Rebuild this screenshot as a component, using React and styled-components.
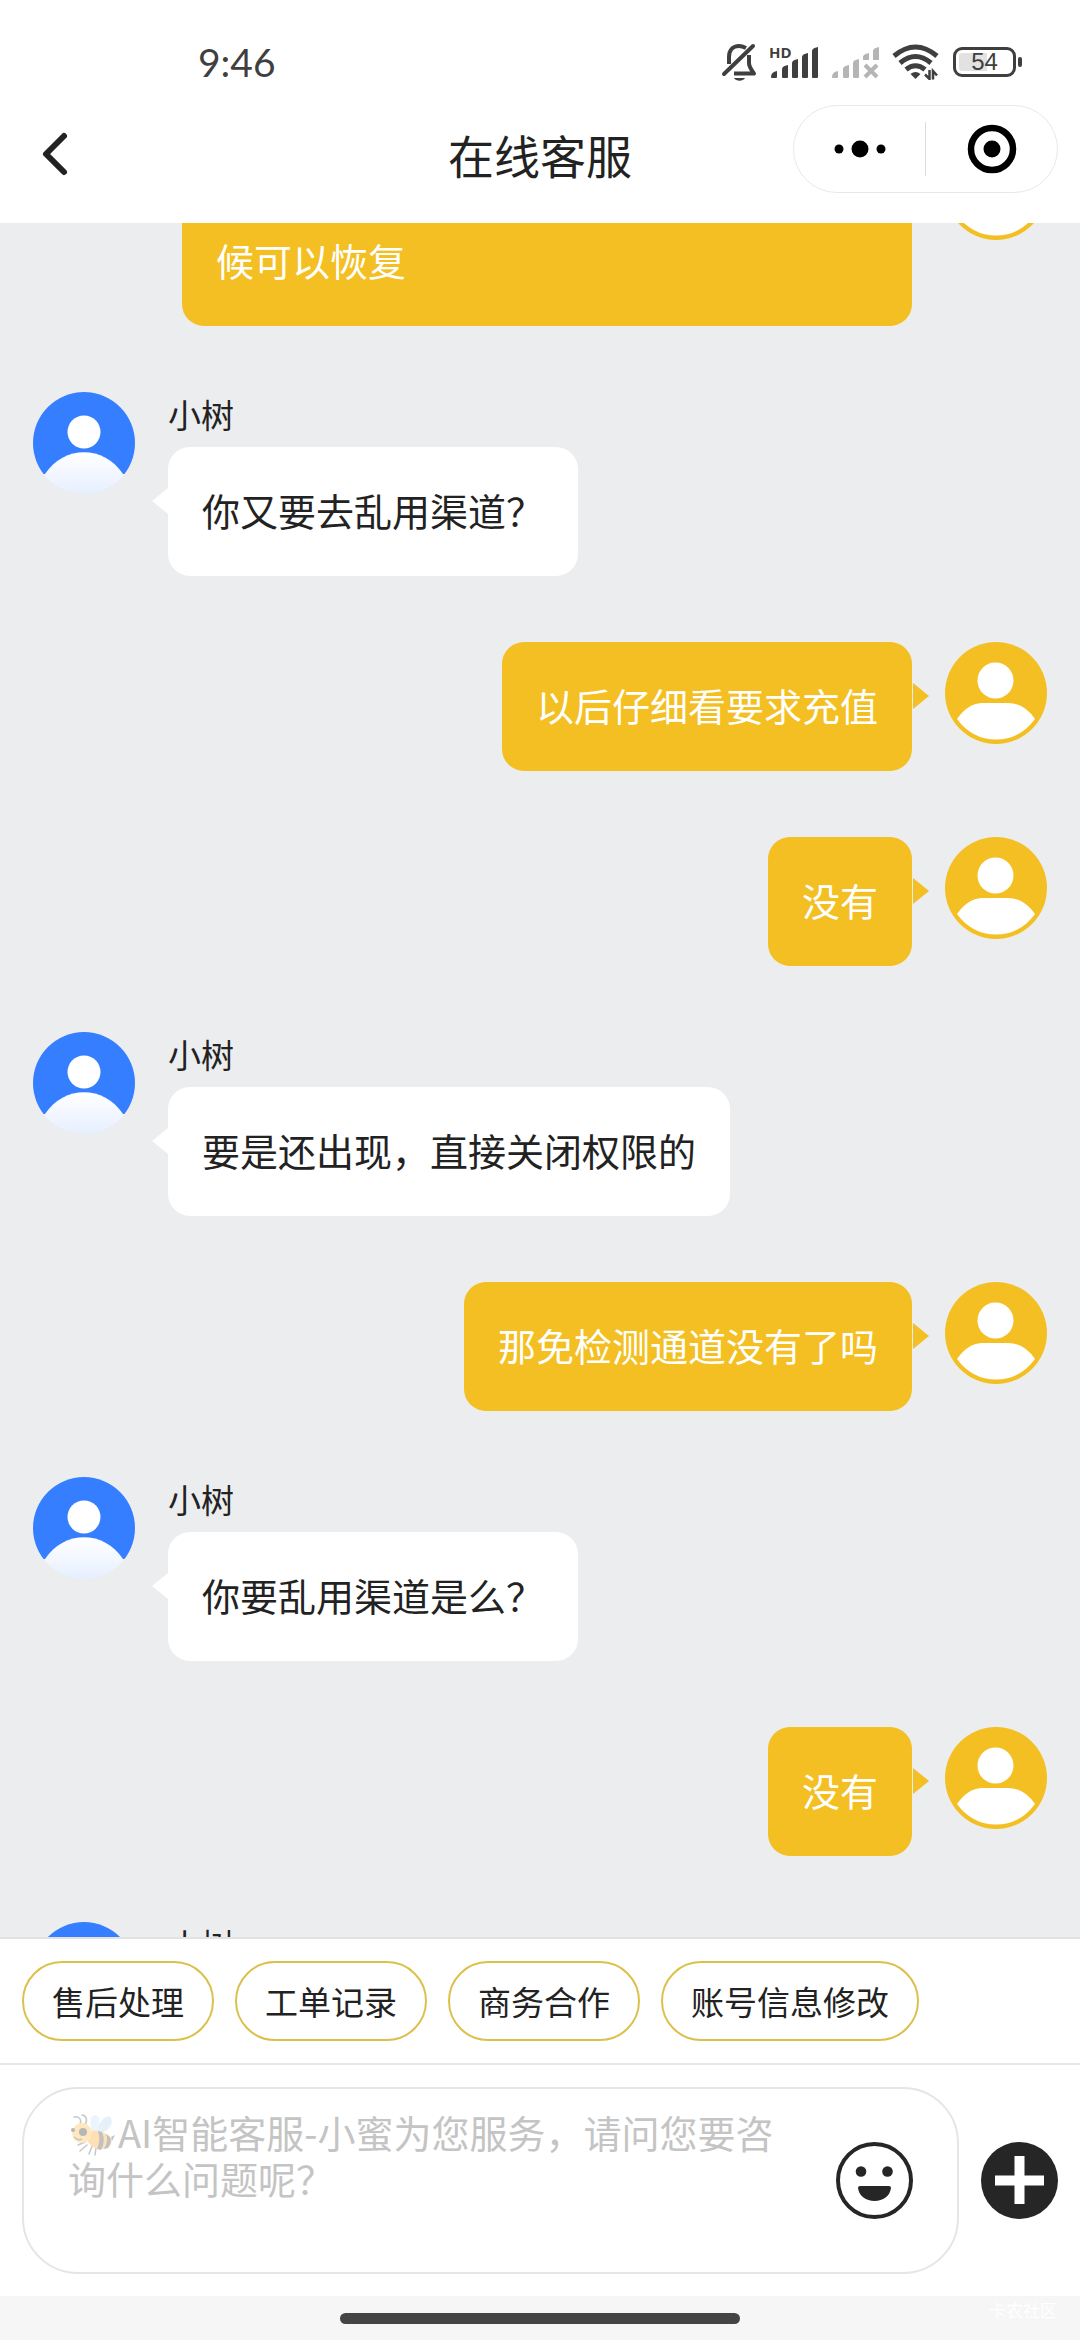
import React, { useLayoutEffect, useRef } from 'react';
import styled, { createGlobalStyle, css } from 'styled-components';

const GlobalStyle = createGlobalStyle`
  * {
    box-sizing: border-box;
  }

  body {
    margin: 0;
    font-family: 'Noto Sans CJK SC', 'Noto Sans', sans-serif;
    color: #222;
    background-color: #fff;
  }

  button {
    padding: 0;
    border: none;
    background: none;
    font: inherit;
    color: inherit;
    cursor: pointer;
  }

  svg {
    display: block;
  }
`;

const Page = styled.div`
  display: flex;
  flex-direction: column;
  height: 100vh;
`;

const StatusBar = styled.div`
  display: flex;
  align-items: center;
  justify-content: space-between;
  height: 94px;
  padding: 30px 58px 0 198px;
  color: #3f3f3f;
`;

const Clock = styled.time`
  font-family: Lato, sans-serif;
  font-size: 39px;
  line-height: 64px;
`;

const StatusIcons = styled.div`
  display: flex;
  align-items: center;
  gap: 12px;
`;

const Battery = styled.div`
  display: flex;
  align-items: center;
  gap: 2px;
  margin-left: 2px;

  &::after {
    content: '';
    width: 4px;
    height: 10px;
    border-radius: 2px;
    background-color: #3f3f3f;
  }
`;

const BatteryLevel = styled.span`
  width: 63px;
  height: 30px;
  border: 3px solid #3f3f3f;
  border-radius: 9px;
  background: linear-gradient(90deg, #e2e2e2 54%, transparent 54%) content-box;
  padding: 3px;
  font-family: 'Liberation Sans', sans-serif;
  font-size: 24px;
  line-height: 18px;
  text-align: center;
`;

const TitleBar = styled.header`
  display: grid;
  grid-template-columns: 1fr auto 1fr;
  align-items: center;
  height: 129px;
  padding: 0 22px 20px;
`;

const BackButton = styled.button`
  justify-self: start;
  padding-top: 10px;
`;

const Title = styled.h1`
  margin: 0;
  padding-top: 10px;
  font-size: 46px;
  line-height: 64px;
  font-weight: 400;
`;

const Capsule = styled.div`
  justify-self: end;
  display: flex;
  align-items: center;
  width: 265px;
  height: 88px;
  border: 1px solid #e8e8e8;
  border-radius: 44px;
`;

const CapsuleButton = styled.button`
  flex: 1;
  display: flex;
  align-items: center;
  justify-content: center;
  height: 54px;

  & + & {
    border-left: 1px solid #ddd;
  }
`;

const History = styled.main`
  flex: 1;
  min-height: 0;
  overflow-y: auto;
  scrollbar-width: none;
  background-color: #ebedef;
`;

const MessageList = styled.ul`
  display: flex;
  flex-direction: column;
  gap: 66px;
  margin: 0;
  padding: 0 33px;
  list-style: none;
`;

const MessageRow = styled.li`
  display: flex;
  align-items: flex-start;
  gap: 33px;
  flex-direction: ${(props) => (props.$mine ? 'row-reverse' : 'row')};
`;

const MessageBody = styled.div`
  display: flex;
  flex-direction: column;
  align-items: ${(props) => (props.$full ? 'stretch' : 'flex-start')};
  ${(props) =>
    props.$full &&
    css`
      flex: 1;
      margin-left: 149px;
    `}
`;

const Sender = styled.span`
  margin-bottom: 10px;
  font-size: 33px;
  line-height: 45px;
`;

const Bubble = styled.p`
  position: relative;
  margin: 0;
  padding: 33px 34px 37px;
  border-radius: 22px;
  font-size: 38px;
  line-height: 59px;
  white-space: pre-line;
  background-color: ${(props) => (props.$mine ? '#f3bf22' : '#fff')};
  color: ${(props) => (props.$mine ? '#fff' : '#222')};

  &::after {
    content: '';
    position: absolute;
    top: 41px;
    border: 13px solid transparent;
    ${(props) =>
      props.$mine
        ? css`
            left: calc(100% + 1px);
            border-left: 16px solid #f3bf22;
            border-right-width: 0;
          `
        : css`
            right: 100%;
            border-right: 16px solid #fff;
            border-left-width: 0;
          `}
  }
`;

const QuickBar = styled.nav`
  display: flex;
  gap: 21px;
  padding: 22px;
  border-top: 2px solid #e2e2e2;
  border-bottom: 2px solid #e8e8e8;
`;

const QuickButton = styled.button`
  height: 80px;
  padding: 0 28px;
  border: 2px solid #dcc04c;
  border-radius: 40px;
  font-size: 33px;
  line-height: 48px;
`;

const Composer = styled.form`
  display: flex;
  align-items: center;
  gap: 22px;
  padding: 22px;
`;

const InputBox = styled.div`
  position: relative;
  flex: 1;
  display: flex;
  align-items: center;
  gap: 38px;
  height: 187px;
  padding: 20px 44px;
  border: 2px solid #e5e5e5;
  border-radius: 56px;

  > svg {
    position: absolute;
    top: 24px;
    left: 46px;
  }
`;

const MessageInput = styled.textarea`
  flex: 1;
  min-width: 0;
  align-self: stretch;
  padding: 0;
  border: none;
  outline: none;
  resize: none;
  background: transparent;
  font: inherit;
  font-size: 38px;
  line-height: 46px;
  text-indent: 50px;
  overflow: hidden;

  &::placeholder {
    color: #c4c4c4;
    opacity: 1;
  }
`;

const HomeBar = styled.footer`
  position: relative;
  display: flex;
  align-items: center;
  justify-content: center;
  height: 44px;
  background-color: #f6f6f6;

  &::before {
    content: '';
    width: 37%;
    height: 11px;
    border-radius: 6px;
    background-color: #444;
  }
`;

const Watermark = styled.span`
  position: absolute;
  top: 2px;
  right: 23px;
  font-size: 17px;
  line-height: 24px;
  color: #fff;
`;

const MutedBell = () => (
  <svg width="36" height="38" viewBox="0 0 36 38" fill="none" stroke="currentColor" strokeWidth="4" strokeLinejoin="round">
    <path d="M8 21V14C8 7 12 3 18 3C21 3 23 4 25 5" />
    <path d="M28 12V20C28 24 30 26 33 30.500H13" />
    <path d="M32 3L3 31" strokeLinecap="round" />
    <path d="M13 35H24C22 38.500 15 38.500 13 35Z" fill="currentColor" stroke="none" />
  </svg>
);

const Signal = () => (
  <svg width="50" height="36" viewBox="0 0 50 36" fill="currentColor">
    <text x="0" y="14" fontSize="15" fontWeight="700" fontFamily="'Open Sans', sans-serif">HD</text>
    <path d="M2 33Q2 28 8 27V33Q8 34 7 34H3Q2 34 2 33ZM13 25Q13 22 19 21V33Q19 34 18 34H14Q13 34 13 33ZM23 19Q23 16 29 15V33Q29 34 28 34H24Q23 34 23 33ZM33 13Q33 10 39 9V33Q39 34 38 34H34Q33 34 33 33ZM43 7Q43 4 49 3V33Q49 34 48 34H44Q43 34 43 33Z" />
  </svg>
);

const NoSignal = () => (
  <svg width="49" height="36" viewBox="0 0 49 36" fill="#b5b5b5">
    <path d="M1 33Q1 28 7 27V33Q7 34 6 34H2Q1 34 1 33ZM12 25Q12 22 18 21V33Q18 34 17 34H13Q12 34 12 33ZM22 19Q22 16 28 15V33Q28 34 27 34H23Q22 34 22 33ZM32 13Q32 10 38 9V16H32ZM42 7Q42 4 48 3V16H42Z" />
    <path d="M34 21L46 33M46 21L34 33" stroke="#b5b5b5" strokeWidth="4" />
  </svg>
);

const Wifi = () => (
  <svg width="47" height="36" viewBox="0 0 47 36" fill="none" stroke="currentColor" strokeWidth="5">
    <path d="M2 12Q23.500 -6 45 12" />
    <path d="M8 19Q23.500 6 39 19" />
    <path d="M14 25.500Q23.500 18 33 25.500" />
    <path d="M18.500 30Q23.500 26 28.500 30L23.500 35Z" fill="currentColor" stroke="none" />
    <path d="M37.500 26V35L33 30.500M41 35.500V27L45 31.500" strokeWidth="2.500" />
  </svg>
);

const AgentAvatar = () => (
  <svg width="102" height="102" viewBox="0 0 102 102" role="img" aria-label="客服头像">
    <defs>
      <linearGradient id="shoulders" x1="0" y1="0" x2="0" y2="1">
        <stop offset="0" stopColor="#fff" />
        <stop offset="1" stopColor="#e6efff" />
      </linearGradient>
      <clipPath id="agentCircle">
        <circle cx="51" cy="51" r="51" />
      </clipPath>
    </defs>
    <g clipPath="url(#agentCircle)">
      <path d="M0 0H102V82H0Z" fill="#347eff" />
      <path d="M12 82C31 53 71 53 90 82C90 92 70 102 51 102C32 102 12 92 12 82Z" fill="url(#shoulders)" />
      <circle cx="51" cy="40" r="16.500" fill="#fff" />
    </g>
  </svg>
);

const UserAvatar = () => (
  <svg width="102" height="102" viewBox="0 0 102 102" role="img" aria-label="我的头像">
    <circle cx="51" cy="51" r="51" fill="#f3bf22" />
    <circle cx="50.500" cy="38.500" r="18" fill="#fff" />
    <path d="M12 77Q23 61 38 61H63Q79 61 90 77Q75 97.500 51 97.500Q27 97.500 12 77Z" fill="#fff" />
  </svg>
);

const Bee = () => (
  <svg width="46" height="44" viewBox="0 0 46 44" fill="none" opacity="0.32">
    <path d="M22 18C19 9 20 1 26 2C31 3 30 11 27 18Z" fill="#c4e3f5" />
    <path d="M27 19C28 8 38 0 41 5C44 11 38 18 31 20Z" fill="#aed6f0" />
    <path d="M10 12C12 6 9 3 4 4M15 12C18 7 16 2 12 2" stroke="#555" strokeWidth="1.500" strokeLinecap="round" />
    <path d="M22 33L19 41M26 35L25 42M17 32L10 38M15 29L8 32" stroke="#555" strokeWidth="1.500" strokeLinecap="round" />
    <path d="M15 20Q26 14 38 22Q44 26 40 33Q34 38 25 35Q16 31 15 20Z" fill="#fba31b" />
    <path d="M28 18Q31 27 27 36L31 37Q36 28 32 19ZM36 21Q39 27 34 36L38 35Q43 28 39 23Z" fill="#44403a" />
    <path d="M41 24L45 22L42 28Z" fill="#44403a" />
    <circle cx="12" cy="20" r="10" fill="#ffbb38" />
    <circle cx="13" cy="19" r="4" fill="#222" />
    <circle cx="3" cy="17" r="2" fill="#222" />
    <path d="M4 24Q8 28 12 26" stroke="#553" strokeWidth="1.500" />
  </svg>
);

const messages = [
  { id: 1, mine: true, full: true, text: '\n候可以恢复' },
  { id: 2, sender: '小树', text: '你又要去乱用渠道？' },
  { id: 3, mine: true, text: '以后仔细看要求充值' },
  { id: 4, mine: true, text: '没有' },
  { id: 5, sender: '小树', text: '要是还出现，直接关闭权限的' },
  { id: 6, mine: true, text: '那免检测通道没有了吗' },
  { id: 7, sender: '小树', text: '你要乱用渠道是么？' },
  { id: 8, mine: true, text: '没有' },
  { id: 9, sender: '小树' },
];

const quickActions = ['售后处理', '工单记录', '商务合作', '账号信息修改'];

const SCROLL_START = 85;

const Message = ({ mine, full, sender, text }) => (
  <MessageRow $mine={mine}>
    {mine ? <UserAvatar /> : <AgentAvatar />}
    <MessageBody $full={full}>
      {sender && <Sender>{sender}</Sender>}
      {text && <Bubble $mine={mine}>{text}</Bubble>}
    </MessageBody>
  </MessageRow>
);

const App = () => {
  const historyRef = useRef(null);

  useLayoutEffect(() => {
    historyRef.current.scrollTop = SCROLL_START;
  }, []);

  return (
    <Page>
      <GlobalStyle />
      <StatusBar>
        <Clock>9:46</Clock>
        <StatusIcons>
          <MutedBell />
          <Signal />
          <NoSignal />
          <Wifi />
          <Battery>
            <BatteryLevel>54</BatteryLevel>
          </Battery>
        </StatusIcons>
      </StatusBar>

      <TitleBar>
        <BackButton type="button" aria-label="返回">
          <svg width="66" height="50" viewBox="0 0 66 50" fill="none" stroke="#222" strokeWidth="6" strokeLinecap="round" strokeLinejoin="round">
            <path d="M42 7L24 25L42 43" />
          </svg>
        </BackButton>
        <Title>在线客服</Title>
        <Capsule>
          <CapsuleButton type="button" aria-label="更多">
            <svg width="52" height="18" viewBox="0 0 52 18" fill="#000">
              <circle cx="5" cy="9" r="4.500" />
              <circle cx="26" cy="9" r="8.500" />
              <circle cx="47" cy="9" r="4.500" />
            </svg>
          </CapsuleButton>
          <CapsuleButton type="button" aria-label="关闭">
            <svg width="50" height="50" viewBox="0 0 50 50">
              <circle cx="25" cy="25" r="21" fill="none" stroke="#000" strokeWidth="6.500" />
              <circle cx="25" cy="25" r="8.500" />
            </svg>
          </CapsuleButton>
        </Capsule>
      </TitleBar>

      <History ref={historyRef}>
        <MessageList>
          {messages.map((message) => (
            <Message key={message.id} {...message} />
          ))}
        </MessageList>
      </History>

      <QuickBar>
        {quickActions.map((action) => (
          <QuickButton key={action} type="button">
            {action}
          </QuickButton>
        ))}
      </QuickBar>

      <Composer>
        <InputBox>
          <Bee />
          <MessageInput
            aria-label="输入消息"
            placeholder="AI智能客服-小蜜为您服务，请问您要咨询什么问题呢？"
          />
          <button type="button" aria-label="表情">
            <svg width="77" height="77" viewBox="0 0 77 77" fill="#262626">
              <circle cx="38.500" cy="38.500" r="36.500" fill="none" stroke="#262626" strokeWidth="4" />
              <circle cx="25" cy="29.500" r="5.300" />
              <circle cx="51.500" cy="29.500" r="5.300" />
              <path d="M24 44H53Q55 44 55 46C54 54 47 59 38.500 59C30 59 23 54 22 46Q22 44 24 44Z" />
            </svg>
          </button>
        </InputBox>
        <button type="button" aria-label="更多功能">
          <svg width="77" height="77" viewBox="0 0 77 77">
            <circle cx="38.500" cy="38.500" r="38.500" fill="#262626" />
            <path d="M38.500 14V62M14 38.500H63" stroke="#fff" strokeWidth="10" />
          </svg>
        </button>
      </Composer>

      <HomeBar>
        <Watermark>卡农社区</Watermark>
      </HomeBar>
    </Page>
  );
};

export default App;
